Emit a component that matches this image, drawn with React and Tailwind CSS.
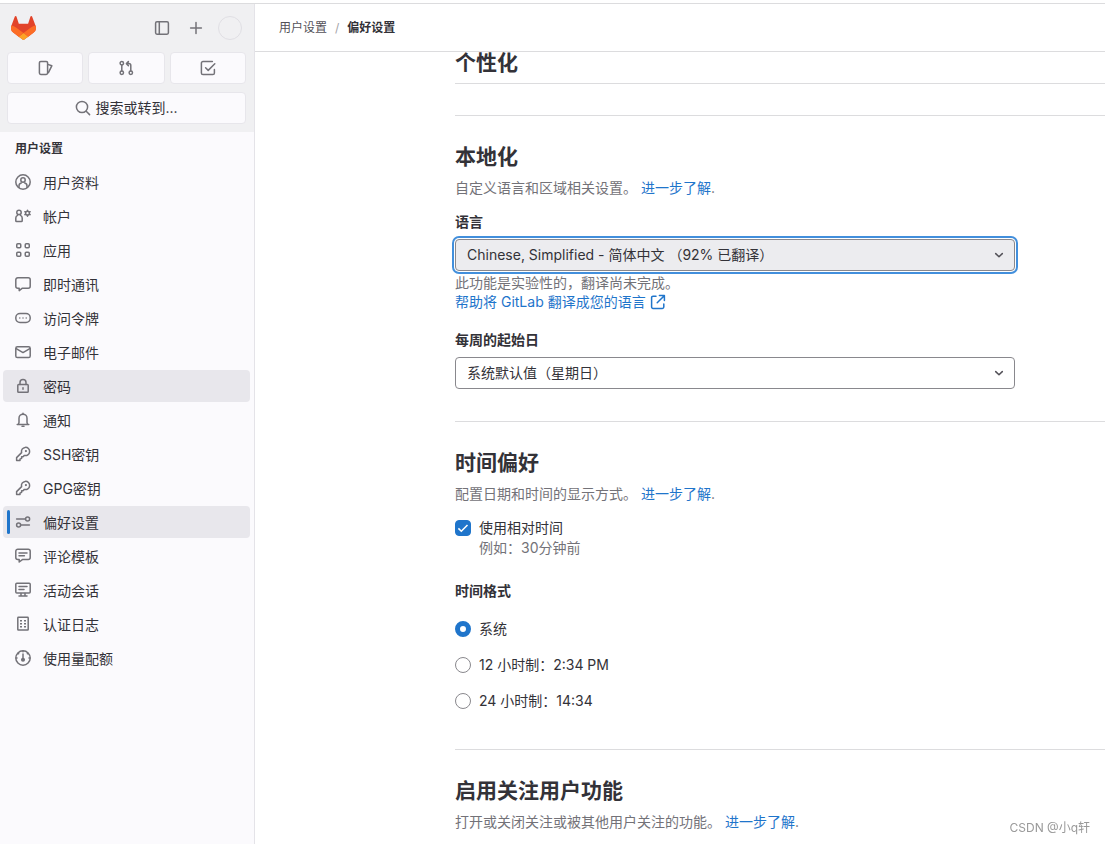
import { useState } from "react";

function Icon({ children, className = "text-[#737278]" }) {
  return (
    <svg
      width="16"
      height="16"
      viewBox="0 0 16 16"
      fill="none"
      stroke="currentColor"
      strokeWidth="1.5"
      strokeLinecap="round"
      strokeLinejoin="round"
      aria-hidden="true"
      className={`shrink-0 ${className}`}
    >
      {children}
    </svg>
  );
}

const key = (
  <>
    <path d="M6.6 6.6a4.1 4.1 0 1 1 2.8 2.8L8 10.8H6.6v1.5L5 13.2v1.2H1.6v-2.8z" />
    <circle cx="10.9" cy="5.1" r="1.1" fill="currentColor" stroke="none" />
  </>
);

const navItems = [
  {
    label: "用户资料",
    icon: (
      <>
        <circle cx="8" cy="8" r="7.2" />
        <circle cx="8" cy="6" r="2.2" />
        <path d="M4 13.6V12a3 3 0 0 1 2.3-3M12 13.6V12a3 3 0 0 0-2.3-3" />
      </>
    )
  },
  {
    label: "帐户",
    icon: (
      <>
        <circle cx="4" cy="4.4" r="2.2" />
        <path d="M2.6 7.4a2.8 2.8 0 0 0-1.8 2.7v2.6q0 .8.8.8h4.8q.8 0 .8-.8v-2.6a2.8 2.8 0 0 0-1.8-2.7" />
        <circle cx="12.5" cy="5.2" r="1.9" />
        <path d="M12.5 2.2v.6M12.5 7.6v.6M9.9 3.7l.5.3M14.6 6.4l.5.3M9.9 6.7l.5-.3M14.6 4l.5-.3" />
      </>
    )
  },
  {
    label: "应用",
    icon: (
      <>
        <rect x="1.75" y="1.75" width="4" height="4" rx="1" />
        <rect x="10.25" y="1.75" width="4" height="4" rx="1" />
        <rect x="1.75" y="10.25" width="4" height="4" rx="1" />
        <rect x="10.25" y="10.25" width="4" height="4" rx="1" />
      </>
    )
  },
  {
    label: "即时通讯",
    icon: <path d="M2.8 1.8h10.4a2 2 0 0 1 2 2v6.4a2 2 0 0 1-2 2H7.4L4.2 14.6v-2.4H2.8a2 2 0 0 1-2-2V3.8a2 2 0 0 1 2-2z" />
  },
  {
    label: "访问令牌",
    icon: (
      <>
        <rect x="0.8" y="3.5" width="14.4" height="9" rx="4.2" />
        <path d="M4.8 8h.01M8 8h.01M11.2 8h.01" />
      </>
    )
  },
  {
    label: "电子邮件",
    icon: (
      <>
        <rect x="0.8" y="2.8" width="14.4" height="10.8" rx="1.6" />
        <path d="m1.2 4.6 6.8 4 6.8-4" />
      </>
    )
  },
  {
    label: "密码",
    hovered: true,
    icon: (
      <>
        <rect x="2.8" y="6.6" width="10.4" height="7.6" rx="0.8" />
        <path d="M5 6.4V4.6a3 3 0 0 1 6 0v1.8M8 9.8v1.4" />
      </>
    )
  },
  {
    label: "通知",
    icon: (
      <>
        <path d="M2.2 12.4h11.6M3.4 12.2 4 10.6V6.2a4 4 0 0 1 8 0v4.4l.6 1.6" />
        <path d="M8 1.2v.8M7 14.2h2" />
      </>
    )
  },
  { label: "SSH密钥", icon: key },
  { label: "GPG密钥", icon: key },
  {
    label: "偏好设置",
    active: true,
    icon: (
      <>
        <circle cx="12.6" cy="5" r="2" />
        <circle cx="3.6" cy="11" r="2" />
        <path d="M1.6 5h8.6M6 11h8.4" />
      </>
    )
  },
  {
    label: "评论模板",
    icon: (
      <>
        <path d="M2.8 1.2h10.4a2 2 0 0 1 2 2v6.4a2 2 0 0 1-2 2H7.4L4.2 14v-2.4H2.8a2 2 0 0 1-2-2V3.2a2 2 0 0 1 2-2z" />
        <path d="M4 5h8M4 7.8h5.4" />
      </>
    )
  },
  {
    label: "活动会话",
    icon: (
      <>
        <rect x="0.8" y="1.3" width="14.4" height="9.6" rx="1" />
        <path d="M4 4.6h8M4 7.4h5M6 11.4v2.4M10 11.4v2.4M4 14h8" />
      </>
    )
  },
  {
    label: "认证日志",
    icon: (
      <>
        <rect x="2.8" y="1.3" width="10.4" height="12.8" rx="0.6" />
        <path strokeLinecap="butt" d="M5 4.7h2M9 4.7h2M5 7.7h2M9 7.7h2M5 10.7h2M9 10.7h2" />
      </>
    )
  },
  {
    label: "使用量配额",
    icon: (
      <>
        <circle cx="8" cy="8" r="7.2" />
        <path d="M8 4v5M8 1.2v.6M3.2 3.2l.4.4M12.8 3.2l-.4.4M1.4 8H2M14 8h.6" />
        <circle cx="8" cy="9.8" r="1.3" fill="currentColor" />
      </>
    )
  }
];

const shortcuts = [
  {
    label: "议题",
    icon: (
      <>
        <rect x="2.4" y="1.4" width="8.2" height="13" rx="1.4" />
        <path d="M10.8 4.4 14.8 5.8 11.4 12.6" />
      </>
    )
  },
  {
    label: "合并请求",
    icon: (
      <>
        <circle cx="3.8" cy="3.2" r="1.7" />
        <circle cx="3.8" cy="12.8" r="1.7" />
        <circle cx="12.8" cy="12.8" r="1.7" />
        <path d="M3.8 5v6M12.8 11V5.6a2 2 0 0 0-2-2H8.9M10.4 1.6l-2 2 2 2" />
      </>
    )
  },
  {
    label: "待办事项",
    icon: <path d="M12.4 1.5H3a1.6 1.6 0 0 0-1.6 1.6V13A1.6 1.6 0 0 0 3 14.6h9.8a1.6 1.6 0 0 0 1.6-1.6V9.4M5.6 7.8l2.6 2.6 6.6-6.6" />
  }
];

function Logo() {
  return (
    <svg width="25" height="24" viewBox="0 0 25 24" aria-hidden="true">
      <path fill="#E24329" d="m24.507 9.5-.034-.09L21.082.562a.896.896 0 0 0-1.694.091l-2.29 7.01H7.825L5.535.653a.898.898 0 0 0-1.694-.09L.451 9.411.416 9.5a6.297 6.297 0 0 0 2.09 7.278l.012.01.03.022 5.16 3.867 2.56 1.935 1.554 1.176a1.051 1.051 0 0 0 1.268 0l1.555-1.176 2.56-1.935 5.197-3.89.014-.01A6.297 6.297 0 0 0 24.507 9.5Z" />
      <path fill="#FC6D26" d="m24.507 9.5-.034-.09a11.44 11.44 0 0 0-4.56 2.051l-7.447 5.632 4.742 3.584 5.197-3.89.014-.01A6.297 6.297 0 0 0 24.507 9.5Z" />
      <path fill="#FCA326" d="m7.707 20.677 2.56 1.935 1.555 1.176a1.051 1.051 0 0 0 1.268 0l1.555-1.176 2.56-1.935-4.743-3.584-4.755 3.584Z" />
      <path fill="#FC6D26" d="M5.01 11.461a11.43 11.43 0 0 0-4.56-2.05L.416 9.5a6.297 6.297 0 0 0 2.09 7.278l.012.01.03.022 5.16 3.867 4.745-3.584-7.444-5.632Z" />
    </svg>
  );
}

function Sidebar() {
  return (
    <aside className="flex w-[255px] shrink-0 flex-col border-r border-[#e4e3e8] bg-[#fbfafd]">
      <div className="flex flex-col gap-2 bg-[#f0f0f2] py-2 pr-2 pl-[7px]">
        <div className="flex h-8 items-center justify-between pl-1">
          <a href="#home" aria-label="主页">
            <Logo />
          </a>
          <div className="flex gap-0.5">
            <button type="button" aria-label="隐藏侧边栏" className="flex h-8 w-8 items-center justify-center">
              <Icon>
                <rect x="1.6" y="1.8" width="12.8" height="12.4" rx="1.4" />
                <path d="M5.3 2v12" />
              </Icon>
            </button>
            <button type="button" aria-label="新建" className="flex h-8 w-8 items-center justify-center">
              <Icon>
                <path d="M8 2.6v10.8M2.6 8h10.8" />
              </Icon>
            </button>
            <button type="button" aria-label="用户菜单" className="flex h-8 w-8 items-center justify-center">
              <span className="h-6 w-6 rounded-full border border-[#e0dfe4]" />
            </button>
          </div>
        </div>

        <div className="grid grid-cols-3 gap-[5px]">
          {shortcuts.map(({ label, icon }) => (
            <a
              key={label}
              href="#dashboard"
              aria-label={label}
              className="flex h-8 items-center justify-center rounded border border-[#e7e6eb] bg-[#fbfafd]"
            >
              <Icon>{icon}</Icon>
            </a>
          ))}
        </div>

        <button
          type="button"
          className="flex h-8 items-center justify-center gap-1 rounded border border-[#e7e6eb] bg-[#fbfafd] text-[#333238]"
        >
          <Icon>
            <circle cx="7" cy="7" r="5.6" />
            <path d="m11.2 11.2 3.4 3.4" />
          </Icon>
          搜索或转到...
        </button>
      </div>

      <nav aria-label="用户设置" className="pt-[7px] pr-1 pl-[3px]">
        <h2 className="mb-[7px] pl-3 text-xs leading-5 font-bold">用户设置</h2>
        <ul className="flex flex-col gap-0.5">
          {navItems.map(({ label, icon, active, hovered }) => (
            <li key={label}>
              <a
                href="#settings"
                aria-current={active ? "page" : undefined}
                className={`relative flex h-8 items-center gap-3 rounded pl-3 hover:bg-[#e8e7ec] ${
                  active || hovered ? "bg-[#e8e7ec]" : ""
                }`}
              >
                {active && <span className="absolute top-1 left-1 h-6 w-[3px] rounded-full bg-[#1f75cb]" />}
                <Icon>{icon}</Icon>
                <span className="pt-px">{label}</span>
              </a>
            </li>
          ))}
        </ul>
      </nav>
    </aside>
  );
}

function SectionHeader({ title, text }) {
  return (
    <>
      <h2 className="mb-2 text-[21px] leading-[26px] font-bold">{title}</h2>
      <p className="text-[#737278]">
        {text}{" "}
        <a href="#help" className="text-[#1f75cb]">
          进一步了解
        </a>
        .
      </p>
    </>
  );
}

function SelectField({ id, label, options, focused }) {
  return (
    <>
      <label htmlFor={id} className="mb-[7px] block font-bold">
        {label}
      </label>
      <div className="relative max-w-[560px]">
        <select
          id={id}
          className={`block h-8 w-full appearance-none rounded border border-[#89888d] pr-8 pl-[11px] outline-none ${
            focused ? "bg-[#ececef] shadow-[0_0_0_1px_#fff,0_0_0_3px_#428fdc]" : "bg-white"
          }`}
        >
          {options.map((option) => (
            <option key={option}>{option}</option>
          ))}
        </select>
        <span className="pointer-events-none absolute inset-y-0 right-2 flex items-center">
          <Icon className="text-[#535158]">
            <path d="m4.7 6.6 3.3 3.2 3.3-3.2" />
          </Icon>
        </span>
      </div>
    </>
  );
}

const timeFormats = [
  { id: "system", label: "系统" },
  { id: "12h", label: "12 小时制：2:34 PM" },
  { id: "24h", label: "24 小时制：14:34" }
];

export default function App() {
  const [relative, setRelative] = useState(true);
  const [timeFormat, setTimeFormat] = useState("system");

  return (
    <div className="flex min-h-screen flex-col bg-white pt-[3px] font-['Inter','Noto_Sans_CJK_SC',sans-serif] text-sm leading-5 text-[#333238]">
      <div className="flex flex-1 border-t border-[#dcdcde]">
        <Sidebar />

        <div className="flex min-w-0 flex-1 flex-col">
          <nav aria-label="面包屑" className="flex h-12 shrink-0 items-center gap-2 border-b border-[#dcdcde] pl-6 text-xs">
            <a href="#profile" className="text-[#535158]">
              用户设置
            </a>
            <span className="text-[#a4a3a8]">/</span>
            <a href="#preferences" aria-current="page" className="font-bold">
              偏好设置
            </a>
          </nav>

          <main className="pl-[200px]">
            <section className="mb-[31px] border-b border-[#dcdcde] pb-[9px]">
              <h2 className="text-[21px] leading-[22px] font-bold">个性化</h2>
            </section>

            <section className="flex flex-col border-t border-[#dcdcde] pt-7 pb-8">
              <SectionHeader title="本地化" text="自定义语言和区域相关设置。" />
              <div className="mt-3.5">
                <SelectField id="language" label="语言" focused options={["Chinese, Simplified - 简体中文 （92% 已翻译）"]} />
              </div>
              <p className="mt-0.5 mb-[19px] leading-[19px] text-[#737278]">
                此功能是实验性的，翻译尚未完成。
                <a href="#translate" className="flex items-center gap-1 text-[#1f75cb]">
                  帮助将 GitLab 翻译成您的语言
                  <Icon className="text-[#1f75cb]">
                    <path d="M6 2.2H3a1.4 1.4 0 0 0-1.4 1.4V13A1.4 1.4 0 0 0 3 14.4h9.4a1.4 1.4 0 0 0 1.4-1.4v-3M9.4 1.6h5v5M14 2 7.2 8.8" />
                  </Icon>
                </a>
              </p>
              <div>
                <SelectField id="first-day" label="每周的起始日" options={["系统默认值（星期日）"]} />
              </div>
            </section>

            <section className="border-t border-[#dcdcde] pt-7 pb-[38px]">
              <SectionHeader title="时间偏好" text="配置日期和时间的显示方式。" />
              <label className="mt-3.5 flex gap-2">
                <span className="relative mt-0.5 h-4 w-4">
                  <input
                    type="checkbox"
                    checked={relative}
                    onChange={(e) => setRelative(e.target.checked)}
                    className="block h-4 w-4 appearance-none rounded border border-[#89888d] bg-white checked:border-[#1f75cb] checked:bg-[#1f75cb]"
                  />
                  <svg width="16" height="16" viewBox="0 0 16 16" fill="none" stroke="#fff" strokeWidth="1.5" className="pointer-events-none absolute inset-0">
                    <path d="m3.4 8.4 2.9 2.9 6.2-6.4" />
                  </svg>
                </span>
                <span>
                  使用相对时间
                  <span className="block text-[#737278]">例如：30分钟前</span>
                </span>
              </label>

              <fieldset className="mt-[23px]">
                <legend className="mb-[18px] font-bold">时间格式</legend>
                <div className="flex flex-col gap-4">
                  {timeFormats.map(({ id, label }) => (
                    <label key={id} className="flex items-center gap-2">
                      <input
                        type="radio"
                        name="time-format"
                        checked={timeFormat === id}
                        onChange={() => setTimeFormat(id)}
                        className="h-4 w-4 appearance-none rounded-full border border-[#89888d] bg-white checked:border-[5px] checked:border-[#1f75cb]"
                      />
                      {label}
                    </label>
                  ))}
                </div>
              </fieldset>
            </section>

            <section className="border-t border-[#dcdcde] pt-7">
              <SectionHeader title="启用关注用户功能" text="打开或关闭关注或被其他用户关注的功能。" />
            </section>
          </main>
        </div>
      </div>

      <span className="pointer-events-none fixed right-[15px] bottom-1.5 text-xs leading-5 text-[#999]">CSDN @小q轩</span>
    </div>
  );
}
